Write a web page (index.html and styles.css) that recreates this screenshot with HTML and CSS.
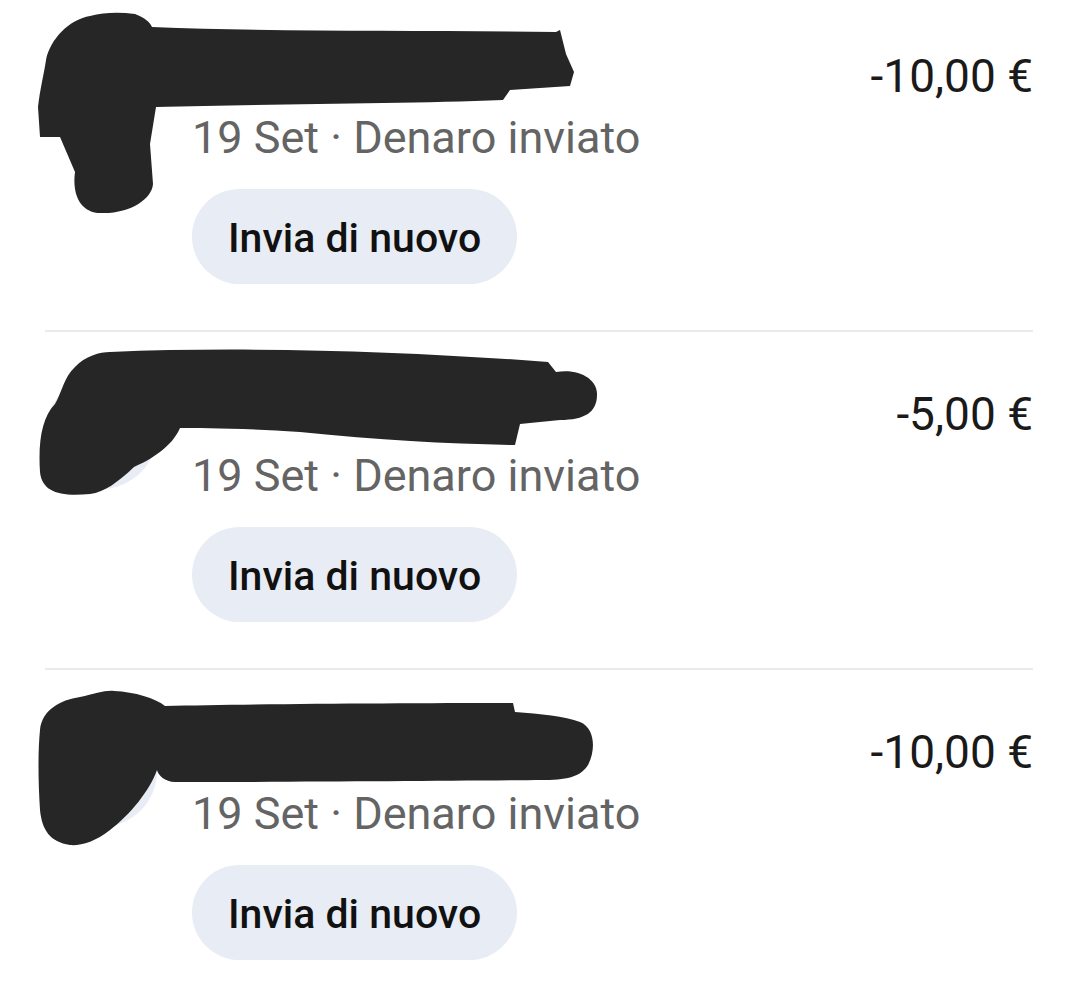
FILE: index.html
```html
<!DOCTYPE html>
<html lang="it">
<head>
<meta charset="utf-8">
<title>Transazioni</title>
<link rel="stylesheet" href="styles.css">
</head>
<body>
<div class="list">
  <div class="row">
    <div class="avatar"></div>
    <div class="main">
      <div class="date">19 Set · Denaro inviato</div>
      <div class="btn">Invia di nuovo</div>
    </div>
    <div class="amount">-10,00 €</div>
    <svg class="redact" viewBox="0 0 1080 336" aria-hidden="true">
      <path d="M152 33 C280 38 420 36 556 38 L560 36 L566 60 L574 78 L570 92 L510 96 L503 106 C400 110 260 110 156 113 L150 150 L153 190 C152 205 130 220 101 219 C80 219 72 200 75 178 L60 143 L40 143 L38 113 C40 95 44 80 46 66 C50 45 70 25 90 22 C105 18 120 18 135 20 C145 24 150 28 152 33 Z"/>
    </svg>
  </div>
  <div class="sep"></div>
  <div class="row">
    <div class="avatar"></div>
    <div class="main">
      <div class="date">19 Set · Denaro inviato</div>
      <div class="btn">Invia di nuovo</div>
    </div>
    <div class="amount">-5,00 €</div>
    <svg class="redact" viewBox="0 0 1080 336" aria-hidden="true">
      <path d="M110 20 C250 14 420 20 548 30 L556 40 C580 36 598 48 597 63 C597 80 585 88 560 88 L520 92 L515 113 C450 112 380 108 300 100 C240 96 200 96 180 96 C172 115 150 128 134 135 C118 150 105 160 90 162 C60 165 42 160 40 140 C38 110 42 85 55 72 C62 60 64 45 75 35 C85 24 100 20 110 20 Z"/>
    </svg>
  </div>
  <div class="sep"></div>
  <div class="row">
    <div class="avatar"></div>
    <div class="main">
      <div class="date">19 Set · Denaro inviato</div>
      <div class="btn">Invia di nuovo</div>
    </div>
    <div class="amount">-10,00 €</div>
    <svg class="redact" viewBox="0 0 1080 336" aria-hidden="true">
      <path d="M165 36 C250 34 400 33 513 33 L515 42 C540 44 565 46 580 52 C595 58 596 80 588 95 C582 105 570 110 545 110 C450 111 300 112 175 112 C165 112 158 105 157 100 C150 120 130 145 110 160 C95 172 80 176 70 175 C50 172 42 160 40 140 C38 110 38 80 40 60 C42 40 60 30 80 27 C95 24 105 20 114 21 C135 22 155 28 165 36 Z"/>
    </svg>
  </div>
</div>
</body>
</html>
```
FILE: styles.css
```css
html, body {
  margin: 0;
  padding: 0;
  background: #ffffff;
}

body {
  font-family: Roboto, "Liberation Sans", sans-serif;
  overflow: hidden;
}

.list {
  margin-top: -6px;
}

.row {
  position: relative;
  display: flex;
  align-items: flex-start;
  padding: 0 47px 46px 45px;
}

.avatar {
  flex: none;
  width: 112px;
  height: 112px;
  margin-top: 45px;
  border-radius: 50%;
  background: #e8ecf4;
}

.main {
  flex: 1;
  display: flex;
  flex-direction: column;
  align-items: flex-start;
  margin-left: 35px;
  padding-top: 120px;
}

.date {
  font-size: 45px;
  line-height: 48px;
  color: #646464;
  white-space: nowrap;
}

.btn {
  margin-top: 27px;
  height: 91px;
  padding: 4px 36px 0;
  border-radius: 48px;
  background: #e8ecf4;
  color: #111111;
  font-size: 41px;
  font-weight: 500;
  line-height: 91px;
  white-space: nowrap;
}

.amount {
  flex: none;
  padding-top: 58px;
  font-size: 46px;
  line-height: 48px;
  color: #1a1a1a;
  white-space: nowrap;
}

.redact {
  position: absolute;
  left: 0;
  top: 0;
  width: 1080px;
  height: 336px;
  overflow: visible;
  pointer-events: none;
}

.redact path {
  fill: #262626;
}

.sep {
  height: 2px;
  margin: 0 47px 0 45px;
  background: #e8eaed;
}
```
